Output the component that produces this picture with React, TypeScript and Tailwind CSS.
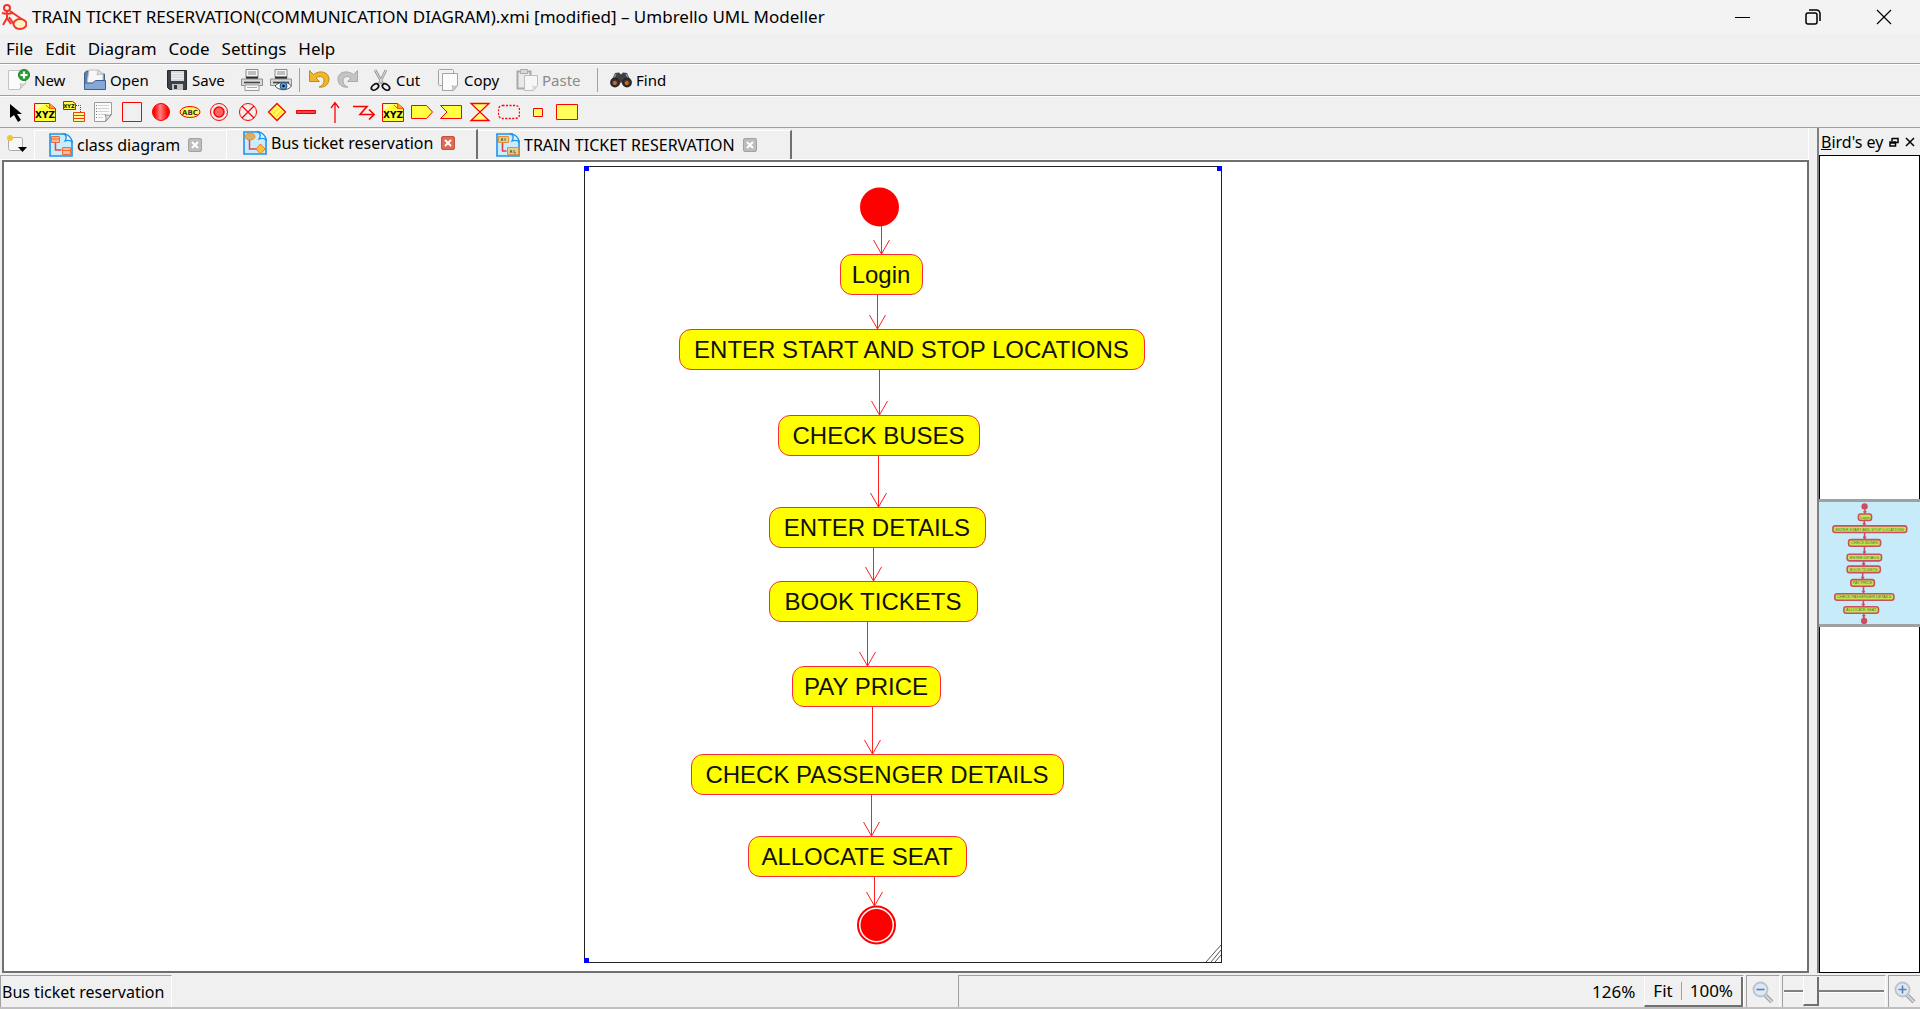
import type { ReactNode } from 'react';

type Box = { label: string; x: number; y: number; w: number };
type Link = { x: number; y1: number; y2: number };

const BOX_H = 41;

const boxes: Box[] = [
  { label: 'Login', x: 256, y: 88, w: 83 },
  { label: 'ENTER START AND STOP LOCATIONS', x: 95, y: 163, w: 466 },
  { label: 'CHECK BUSES', x: 194, y: 249, w: 202 },
  { label: 'ENTER DETAILS', x: 185, y: 341, w: 217 },
  { label: 'BOOK TICKETS', x: 185, y: 415, w: 209 },
  { label: 'PAY PRICE', x: 208, y: 500, w: 149 },
  { label: 'CHECK PASSENGER DETAILS', x: 107, y: 588, w: 373 },
  { label: 'ALLOCATE SEAT', x: 164, y: 670, w: 219 },
];

const links: Link[] = [
  { x: 297, y1: 60, y2: 88 },
  { x: 293, y1: 129, y2: 163 },
  { x: 295, y1: 204, y2: 249 },
  { x: 294, y1: 290, y2: 341 },
  { x: 289, y1: 382, y2: 415 },
  { x: 283, y1: 456, y2: 500 },
  { x: 288, y1: 541, y2: 588 },
  { x: 287, y1: 629, y2: 670 },
  { x: 290, y1: 711, y2: 740 },
];

function Svg({ children, size = 22 }: { children: ReactNode; size?: number }) {
  return (
    <svg width={size} height={size} viewBox={`0 0 ${size} ${size}`} fill="none" aria-hidden="true" className="shrink-0">
      {children}
    </svg>
  );
}

const AppIcon = () => (
  <Svg size={26}>
    <g stroke="#f4342a" strokeWidth="2">
      <circle cx="6" cy="4" r="3" />
      <path d="M6 7v7M1 9l5 1 6-1M6 14l-4 7M6 14l4 6M9 7l13 9M8 13l8 12" />
      <ellipse cx="19" cy="20" rx="6.5" ry="5" fill="#fdf3c4" />
    </g>
  </Svg>
);

const NewIcon = () => (
  <Svg>
    <path d="M.5 1.5h17v13l-6 6H.5z" fill="#fbfbfb" stroke="#c3c3c3" />
    <path d="M11.500 20.500c2-2 1-5 .5-6 2 1 4 1 5.500 0z" fill="#ddd" stroke="#b5b5b5" strokeWidth=".7" />
    <circle cx="16" cy="6" r="5.500" fill="#2f9e36" stroke="#19802a" />
    <path d="M16 2.500v7M12.500 6h7" stroke="#fff" strokeWidth="2.200" />
  </Svg>
);
const OpenIcon = () => (
  <Svg>
    <path d="M.5 20V4l2-2h7l2 3h9v15z" fill="#5d7fae" stroke="#3f6090" />
    <path d="M5 1h9l5 4v9H3z" fill="#f7f7f7" stroke="#bbb" />
    <path d="M14 1l-1 5 6-1z" fill="#ddd" stroke="#aaa" strokeWidth=".6" />
    <path d="M.5 20.500V14h8l3-2.500h10v9z" fill="#86a8d6" stroke="#3c5f95" />
  </Svg>
);
const SaveIcon = () => (
  <Svg>
    <path d="M1.500 1.500h19v19h-17l-2-2z" fill="#3d4248" stroke="#262a2e" />
    <path d="M5 2h13v10H5z" fill="#d6d9dc" />
    <path d="M5 4.500h13M5 7h13M5 9.500h13" stroke="#eef0f2" />
    <path d="M6 15h11v6H6z" fill="#bfc3c7" />
    <path d="M8 16h3v4H8z" fill="#33373c" />
  </Svg>
);
const printer = (
  <>
    <path d="M5 .5h12v8H5z" fill="#f5f5f5" stroke="#8a8a8a" />
    <path d="M7 3h8M7 5h8" stroke="#888" />
    <path d="M5 7.500h12v3H5z" fill="#2d2d2d" />
    <path d="M.5 10h21v6.500H.5z" fill="#d9d9d9" stroke="#8e8e8e" />
    <path d="M3 13.500h16" stroke="#444" strokeWidth="1.600" />
  </>
);
const PrintIcon = () => (
  <Svg>
    {printer}
    <path d="M4 16h14v5.500H4z" fill="#fafafa" stroke="#999" />
    <path d="M6 18.500h10" stroke="#aaa" />
  </Svg>
);
const PreviewIcon = () => (
  <Svg>
    {printer}
    <path d="M5 17c5-5 12-5 16.500 0-4 5-12 5-16.500 0z" fill="#fff" stroke="#38516b" />
    <circle cx="13.500" cy="17" r="3.500" fill="#5b9bd0" stroke="#23527c" />
    <circle cx="13.500" cy="17" r="1.300" fill="#111" />
  </Svg>
);
const UndoIcon = () => (
  <Svg>
    <path d="M1.500 1.500v11h10L8 9c4-3 8-1 8 3 0 3-2 5-5 6 6 1 10-3 10-8C21 3 12 .5 5.500 5.500z" fill="#efb62c" stroke="#c48a12" />
  </Svg>
);
const RedoIcon = () => (
  <Svg>
    <path d="M20.500 1.500v11h-10L14 9c-4-3-8-1-8 3 0 3 2 5 5 6-6 1-10-3-10-8C1 3 10 .5 16.500 5.500z" fill="#c4c4c4" stroke="#a8a8a8" />
  </Svg>
);
const CutIcon = () => (
  <Svg>
    <path d="M5 1l8 14M16 1L9 15" stroke="#8b9094" strokeWidth="2.600" />
    <path d="M5 1l8 14M16 1L9 15" stroke="#e4e6e8" strokeWidth="1" />
    <ellipse cx="5" cy="18" rx="4" ry="2.600" transform="rotate(-35 5 18)" stroke="#111" strokeWidth="1.800" />
    <ellipse cx="16" cy="18" rx="4" ry="2.600" transform="rotate(35 16 18)" stroke="#111" strokeWidth="1.800" />
  </Svg>
);
const CopyIcon = () => (
  <Svg>
    <rect x=".5" y=".5" width="15" height="16" rx="1" fill="#f2f2f2" stroke="#a3a3a3" />
    <path d="M4.500 4.500h15v12l-4 5h-11z" fill="#fcfcfc" stroke="#a3a3a3" />
    <path d="M14 21.500c1-2 .8-3 0-5 2 1 4 1 5.500 0z" fill="#ccc" stroke="#aaa" strokeWidth=".6" />
  </Svg>
);
const PasteIcon = () => (
  <Svg>
    <path d="M1.500 2.500h13v17h-13z" fill="#e9e9e9" stroke="#a9a9a9" strokeWidth="2" />
    <path d="M4.500.5h7v4h-7z" fill="#d8d8d8" stroke="#aaa" />
    <path d="M8.500 6.500h13v10l-4 5h-9z" fill="#f6f6f6" stroke="#bdbdbd" />
    <path d="M16 21.500c1-2 .8-3 0-5 2 1 4 1 5.500 0z" fill="#d4d4d4" />
  </Svg>
);
const FindIcon = () => (
  <Svg>
    <path d="M1 13L5 4l4-.5 2 2 2-2 4 .5 4 9-3 4-5-1-2-3-2 3-5 1z" fill="#3e4043" />
    <path d="M6 5l-3 6M16 5l3 6" stroke="#8d9195" strokeWidth="1.500" />
    <circle cx="5" cy="13.500" r="4" fill="#4d3527" stroke="#25272a" strokeWidth="1.800" />
    <circle cx="17" cy="13.500" r="4" fill="#4d3527" stroke="#25272a" strokeWidth="1.800" />
    <circle cx="4.800" cy="14" r="2" fill="#c96a25" />
    <circle cx="16.800" cy="14" r="2" fill="#c96a25" />
  </Svg>
);

const NoteTextIcon = () => (
  <Svg>
    <path d="M.5 2.500h15l6 5v13H.5z" fill="#ffff3c" stroke="red" />
    <path d="M2 3.500h8L2 9z" fill="#fffbd0" />
    <path d="M15.500 2.500v5h6M12 4l4 4" stroke="#f50" fill="#ff9d2e" />
    <text x="11" y="17" textAnchor="middle" fontSize="9" fontWeight="bold" fontFamily="'DejaVu Sans', sans-serif" fill="#000">XYZ</text>
  </Svg>
);
const AnchorIcon = () => (
  <Svg>
    <path d="M.5.5h9l3 2v6H.5z" fill="#ffff3c" stroke="red" />
    <text x="6" y="7" textAnchor="middle" fontSize="5" fontWeight="bold" fontFamily="'DejaVu Sans', sans-serif" fill="#000">XYZ</text>
    <path d="M13 4.500h4.500V12" stroke="red" strokeDasharray="1 1" />
    <path d="M10.500 11.500h11v9h-11zM10.500 14.500h11M10.500 17.500h11" fill="#ffff8c" stroke="#f23c12" />
  </Svg>
);
const MemoIcon = () => (
  <Svg>
    <path d="M2.500 1.500h17v12l-6 7h-11z" fill="#fafafa" stroke="#9c9c9c" />
    <path d="M6 4.500h11M6 7.500h11M6 10.500h11M6 13.500h7M6 16.500h5" stroke="#cfd3d7" />
    <path d="M4.500 4v13" stroke="#777" strokeDasharray="1 2" />
    <path d="M13.500 20.500c1-3 .5-5-.5-7 2 1 4 1 6.500 0z" fill="#e0e0e0" stroke="#8c8c8c" />
  </Svg>
);

const diagramTools: { name: string; icon: ReactNode }[] = [
  { name: 'Select', icon: <Svg><path d="M5 3v14l4-3 4 7 3-2-4-6h5z" fill="#000" /></Svg> },
  { name: 'Note', icon: <NoteTextIcon /> },
  { name: 'Anchor', icon: <AnchorIcon /> },
  { name: 'Memo', icon: <MemoIcon /> },
  { name: 'Box', icon: <Svg><path d="M1.500 1.500h19v19h-19z" stroke="red" /></Svg> },
  {
    name: 'Initial activity',
    icon: (
      <Svg>
        <defs>
          <linearGradient id="ball">
            <stop offset="0.1" stopColor="#f00" />
            <stop offset="0.45" stopColor="#ff8080" />
            <stop offset="0.9" stopColor="#f00" />
          </linearGradient>
        </defs>
        <circle cx="11" cy="11" r="8.500" fill="url(#ball)" stroke="red" />
      </Svg>
    ),
  },
  {
    name: 'Activity',
    icon: (
      <Svg>
        <ellipse cx="11" cy="11" rx="10" ry="5.500" fill="#ffff50" stroke="red" />
        <text x="11" y="14" textAnchor="middle" fontSize="7" fontWeight="bold" fontFamily="'DejaVu Sans', sans-serif" fill="#433">ABC</text>
      </Svg>
    ),
  },
  { name: 'End activity', icon: <Svg><circle cx="11" cy="11" r="8.500" stroke="red" /><circle cx="11" cy="11" r="5" fill="#ff6262" stroke="red" strokeWidth="1.500" /></Svg> },
  { name: 'Final activity', icon: <Svg><circle cx="11" cy="11" r="8.500" stroke="red" /><path d="M5 5l12 12M17 5L5 17" stroke="red" strokeWidth="1.300" /></Svg> },
  { name: 'Branch', icon: <Svg><path d="M11 2.500l8.500 8.500-8.500 8.500L2.500 11z" fill="#ffff4a" stroke="red" strokeWidth="1.300" /><path d="M7 13l6-6M10 16l6-6" stroke="#f6d96a" strokeWidth="1.500" /></Svg> },
  { name: 'Fork/Join', icon: <Svg><path d="M1.500 9.500h19v3h-19z" fill="#f44" stroke="#e80000" /></Svg> },
  { name: 'Transition', icon: <Svg><path d="M11 22V1.500M7 7l4-5.500L15 7" stroke="red" strokeWidth="1.300" /></Svg> },
  { name: 'Exception', icon: <Svg><path d="M0 5.500h14l-7 8h14M16 8.500l5 5-5 5" stroke="red" strokeWidth="1.600" /></Svg> },
  { name: 'Text label', icon: <NoteTextIcon /> },
  { name: 'Send signal', icon: <Svg><path d="M.5 4.500h15l6 6.500-6 6.500H.5z" fill="#ffff40" stroke="red" /></Svg> },
  { name: 'Accept signal', icon: <Svg><path d="M.5 4.500h21v13H.5L7 11z" fill="#ffff40" stroke="red" /></Svg> },
  { name: 'Accept time event', icon: <Svg><path d="M2 2.500h18L2 19.500h18z" fill="#ffff70" stroke="red" strokeWidth="1.300" /></Svg> },
  { name: 'Region', icon: <Svg><rect x=".5" y="4.500" width="21" height="13" rx="4" stroke="red" strokeWidth="1.300" strokeDasharray="2 1.500" /></Svg> },
  { name: 'Pin', icon: <Svg><path d="M6.500 7.500h9v8h-9z" fill="#ffff60" stroke="red" /></Svg> },
  { name: 'Object node', icon: <Svg><path d="M.5 3.500h21v15H.5z" fill="#ffff5c" stroke="red" /></Svg> },
];

function TabIcon({ kind }: { kind: 'class' | 'activity' | 'comm' }) {
  return (
    <Svg size={24}>
      <path d="M1 1h15l7 7v15H1z" fill="#c9ecff" stroke="#1f93ea" strokeWidth="1.600" />
      <path d="M15 1c3 2 3 4 1 7 3-1 5-1 7 1C23 5 19 1 15 1z" fill="#e9f8ff" stroke="#1f93ea" strokeWidth="1.300" />
      {kind === 'class' && (
        <g stroke="#e8703c" fill="#ffb79a">
          <path d="M2.500 3.500h8v6h-8zM13.500 14.500h8v7h-8z" />
          <path d="M2.500 6h8M13.500 17.500h8" />
          <path d="M6.500 10v7h6" fill="none" strokeWidth="1.500" stroke="#e04a3a" />
        </g>
      )}
      {kind === 'activity' && (
        <g stroke="#f08a20">
          <ellipse cx="7" cy="5.500" rx="5" ry="3.500" fill="#dcae62" />
          <path d="M6.500 9v9h7" stroke="#f04040" strokeWidth="1.500" />
          <path d="M17.500 13l4.500 5-4.500 5-4.500-5z" fill="#ffc428" stroke="#f5702c" />
        </g>
      )}
      {kind === 'comm' && (
        <g stroke="#e0903c" fill="#e3cf8e">
          <path d="M2.500 3.500h10v6h-10zM11.500 14.500h11v7h-11z" />
          <path d="M5 8l1-3 1 3M9 5v3M14 20l1-3 1 3M18 17v3h2" stroke="#6d7040" fill="none" />
          <path d="M6.500 10v8h4" fill="none" stroke="#e83a3a" strokeWidth="1.500" />
        </g>
      )}
    </Svg>
  );
}

function CloseBox({ active, label }: { active?: boolean; label: string }) {
  return (
    <button
      aria-label={`Close ${label}`}
      className={
        active
          ? 'flex size-[14px] items-center justify-center rounded-xs border border-[#c5513c] bg-[#dd6a52]'
          : 'flex size-[14px] items-center justify-center rounded-xs border border-[#a2a2a2] bg-[#bdbdbd]'
      }
    >
      <Svg size={8}>
        <path d="M1 1l6 6M7 1L1 7" stroke="#fff" strokeWidth="2" />
      </Svg>
    </button>
  );
}

function ToolButton({ icon, label, width, disabled }: { icon: ReactNode; label: string; width: string; disabled?: boolean }) {
  return (
    <button disabled={disabled} className={`flex h-full items-center gap-1 pl-2 whitespace-nowrap disabled:text-[#8a8a8a] ${width}`}>
      {icon}
      {label}
    </button>
  );
}

function IconButton({ icon, label }: { icon: ReactNode; label: string }) {
  return (
    <button aria-label={label} className="flex h-full w-[29px] items-center justify-center">
      {icon}
    </button>
  );
}

const Divider = () => <span className="mx-1 h-6 w-px bg-[#a0a0a0]" />;

function Magnifier({ plus }: { plus?: boolean }) {
  return (
    <Svg>
      <path d="M13 14l7 7" stroke="#9f9f9f" strokeWidth="4" />
      <path d="M13 14l7 7" stroke="#d6d6d6" strokeWidth="2" />
      <circle cx="8.500" cy="8.500" r="7" fill="#dbe9f7" stroke="#bfc3c8" strokeWidth="1.800" />
      <path d={plus ? 'M4.500 8.500h8M8.500 4.500v8' : 'M4.500 8.500h8'} stroke="#5a7fb0" strokeWidth="1.600" />
    </Svg>
  );
}

function Overview() {
  return (
    <svg viewBox="7 13 638 765" preserveAspectRatio="none" className="h-[122px] w-full" role="img" aria-label="Diagram overview">
      <g stroke="#cb4f5f" strokeWidth="10">
        {links.map((l) => (
          <path key={l.y1} d={`M${l.x} ${l.y1}V${l.y2}M${l.x - 10} ${l.y2 - 14}h20`} />
        ))}
        {boxes.map((b) => (
          <rect key={b.label} x={b.x} y={b.y} width={b.w} height={BOX_H} rx="14" fill="#c3e553" />
        ))}
      </g>
      {boxes.map((b) => (
        <text key={b.label} x={b.x + b.w / 2} y={b.y + 29} textAnchor="middle" fontSize="24" fontFamily="'Liberation Sans', sans-serif" fill="#55702c">
          {b.label}
        </text>
      ))}
      <circle cx="295" cy="41" r="20" fill="#cb4f5f" />
      <circle cx="292" cy="759" r="20" fill="#cb4f5f" />
    </svg>
  );
}

function Diagram() {
  return (
    <div className="relative h-[797px] w-[638px] shrink-0 font-['Liberation_Sans',sans-serif] text-[24px] text-[#111] outline outline-1 -outline-offset-1 outline-[#222]">
      <svg className="absolute inset-0 size-full" fill="none" aria-hidden="true">
        <circle cx="295.500" cy="41" r="19.500" fill="red" />
        {links.map((l) => (
          <path key={l.y1} stroke="#ff2020" d={`M${l.x + 0.5} ${l.y1}V${l.y2}m-8-14l8 14 8-14`} />
        ))}
        <circle cx="292.500" cy="759" r="18.500" fill="#fff" stroke="red" strokeWidth="2" />
        <circle cx="292.500" cy="759" r="16" fill="red" />
        <path d="M622 796l15-17M627 796l10-12M631 796l6-7" stroke="#555" />
        <path d="M0 0h5v5H0zM633 0h5v5h-5zM0 792h5v5H0z" fill="#00f" />
      </svg>
      {boxes.map((b) => (
        <div
          key={b.label}
          className="absolute flex h-[41px] items-center justify-center rounded-xl border border-red-500 bg-[#ff0] whitespace-nowrap"
          style={{ left: b.x, top: b.y, width: b.w }}
        >
          {b.label}
        </div>
      ))}
    </div>
  );
}

export default function App() {
  return (
    <div className="flex h-screen min-h-[640px] flex-col overflow-hidden bg-[#f0f0f0] font-['Noto_Sans',sans-serif] text-[15px] leading-5 text-black">
      <header className="flex h-[34px] shrink-0 items-center bg-[#f3f3f3] pl-px text-[17px]">
        <AppIcon />
        <h1 className="ml-[5px] grow whitespace-nowrap">
          TRAIN TICKET RESERVATION(COMMUNICATION DIAGRAM).xmi [modified] – Umbrello UML Modeller
        </h1>
        <div className="flex">
          <button aria-label="Minimize" className="flex h-8 w-[70px] items-center justify-center">
            <Svg size={16}><path d="M0 8.500h15" stroke="#000" /></Svg>
          </button>
          <button aria-label="Restore" className="flex h-8 w-[70px] items-center justify-center">
            <Svg size={16}>
              <rect x="1" y="4" width="11" height="11" rx="2" stroke="#000" strokeWidth="1.500" />
              <path d="M4 1h7.500A3.500 3.500 0 0 1 15 4.500V12" stroke="#000" strokeWidth="1.500" />
            </Svg>
          </button>
          <button aria-label="Close" className="flex h-8 w-[72px] items-center justify-center">
            <Svg size={16}><path d="M1 1l14 14M15 1L1 15" stroke="#000" strokeWidth="1.200" /></Svg>
          </button>
        </div>
      </header>

      <nav className="flex h-[30px] shrink-0 items-center gap-3 border-b border-[#a0a0a0] pl-[6px] text-[17px]">
        {['File', 'Edit', 'Diagram', 'Code', 'Settings', 'Help'].map((m) => (
          <button key={m}>{m}</button>
        ))}
      </nav>

      <div className="flex h-8 shrink-0 items-center border-t border-b border-t-white border-b-[#a0a0a0]">
        <ToolButton icon={<NewIcon />} label="New" width="w-[76px]" />
        <ToolButton icon={<OpenIcon />} label="Open" width="w-[82px]" />
        <ToolButton icon={<SaveIcon />} label="Save" width="w-[79px]" />
        <IconButton icon={<PrintIcon />} label="Print" />
        <IconButton icon={<PreviewIcon />} label="Print preview" />
        <Divider />
        <IconButton icon={<UndoIcon />} label="Undo" />
        <IconButton icon={<RedoIcon />} label="Redo" />
        <ToolButton icon={<CutIcon />} label="Cut" width="w-[68px]" />
        <ToolButton icon={<CopyIcon />} label="Copy" width="w-[78px]" />
        <ToolButton icon={<PasteIcon />} label="Paste" width="w-[85px]" disabled />
        <Divider />
        <ToolButton icon={<FindIcon />} label="Find" width="w-[76px]" />
      </div>

      <div className="flex h-8 shrink-0 items-center border-t border-b border-t-white border-b-[#a0a0a0] pl-px">
        {diagramTools.map((t) => (
          <IconButton key={t.name} icon={t.icon} label={t.name} />
        ))}
      </div>

      <div className="flex min-h-0 grow">
        <main className="flex min-w-0 grow flex-col">
          <div className="flex h-8 shrink-0 items-stretch border-r border-b border-white text-[16px]">
            <button aria-label="New diagram" className="flex w-[34px] items-center justify-center">
              <Svg>
                <rect x="2.500" y="4.500" width="14" height="13" rx="2" fill="#f7f7f7" stroke="#aaa" />
                <circle cx="4" cy="5" r="3" fill="#f5c33b" />
                <path d="M12 14h9l-4.500 5z" fill="#000" />
              </Svg>
            </button>
            <div className="mt-0.5 flex w-[192px] items-center border-t border-l border-white pb-px pl-[14px]">
              <TabIcon kind="class" />
              <button className="mr-2 ml-1 whitespace-nowrap">class diagram</button>
              <CloseBox label="class diagram" />
            </div>
            <div className="mt-px flex w-[252px] items-center border-t border-l border-r-2 border-white border-r-[#707070] pb-[3px] pl-4">
              <TabIcon kind="activity" />
              <button className="mr-2 ml-1 whitespace-nowrap">Bus ticket reservation</button>
              <CloseBox active label="Bus ticket reservation" />
            </div>
            <div className="mt-0.5 flex w-[314px] items-center border-t border-r-2 border-white border-r-[#707070] pb-px pl-[18px]">
              <TabIcon kind="comm" />
              <button className="mr-2 ml-1 whitespace-nowrap">TRAIN TICKET RESERVATION</button>
              <CloseBox label="TRAIN TICKET RESERVATION" />
            </div>
          </div>
          <div className="ml-0.5 flex min-h-0 grow justify-center overflow-hidden border-2 border-[#707070] bg-white pt-1 pr-1.5">
            <Diagram />
          </div>
        </main>

        <div className="w-2 shrink-0" />

        <aside className="flex w-[103px] shrink-0 flex-col border-l-2 border-[#808080]">
          <div className="flex h-[27px] shrink-0 items-center pl-0.5 text-[16px]">
            <h2 className="w-[63px] overflow-hidden whitespace-nowrap"><span className="underline">B</span>ird's eye view</h2>
            <button aria-label="Float" className="ml-[3px] flex w-[14px] justify-center">
              <Svg size={10}><path d="M3 1.500h6v4H7M1 5h5.500v4H1zM3 1v3M1 6h5" stroke="#000" strokeWidth="1.500" /></Svg>
            </button>
            <button aria-label="Close panel" className="ml-0.5 flex w-[14px] justify-center">
              <Svg size={10}><path d="M1 1l8 8M9 1L1 9" stroke="#000" strokeWidth="1.500" /></Svg>
            </button>
          </div>
          <div className="flex grow flex-col justify-center border border-black bg-white pb-0.5">
            <div className="-mx-px border-y-[3px] border-[#a0a0a0] bg-[#c8ebfa]">
              <Overview />
            </div>
          </div>
        </aside>
      </div>

      <footer className="flex h-9 shrink-0 items-stretch gap-0.5 border-b-2 border-[#bfbfbf] pt-0.5 text-[17px]">
        <div className="flex w-[172px] items-center border-t border-r border-l border-[#a0a0a0] border-r-white pl-px text-[16px] whitespace-nowrap">Bus ticket reservation</div>
        <div className="grow" />
        <div className="flex w-[786px] items-center justify-end border-t border-r border-l border-[#a0a0a0] border-r-white">
          <span className="mr-[9px]">126%</span>
          <div className="flex h-[30px] items-center border-r-2 border-b-2 border-l border-r-[#707070] border-b-[#707070] border-l-white">
            <button className="px-2">Fit</button>
            <span className="h-[18px] w-px bg-[#a0a0a0]" />
            <button className="px-2">100%</button>
          </div>
        </div>
        <button aria-label="Zoom out" className="flex w-[34px] items-center justify-center border-t border-r border-l border-[#a0a0a0] border-r-white"><Magnifier /></button>
        <div className="flex w-[104px] items-center border-t border-r border-l border-[#a0a0a0] border-r-white px-px">
          <input
            type="range"
            aria-label="Zoom level"
            defaultValue={23}
            className="h-[30px] w-full appearance-none bg-transparent [&::-webkit-slider-runnable-track]:h-[3px] [&::-webkit-slider-runnable-track]:border-t-2 [&::-webkit-slider-runnable-track]:border-b [&::-webkit-slider-runnable-track]:border-t-[#808080] [&::-webkit-slider-runnable-track]:border-b-white [&::-webkit-slider-thumb]:-mt-[15px] [&::-webkit-slider-thumb]:h-[29px] [&::-webkit-slider-thumb]:w-4 [&::-webkit-slider-thumb]:appearance-none [&::-webkit-slider-thumb]:border-r-2 [&::-webkit-slider-thumb]:border-b-2 [&::-webkit-slider-thumb]:border-l [&::-webkit-slider-thumb]:border-r-[#707070] [&::-webkit-slider-thumb]:border-b-[#707070] [&::-webkit-slider-thumb]:border-l-white [&::-webkit-slider-thumb]:bg-[#f0f0f0]"
          />
        </div>
        <button aria-label="Zoom in" className="flex w-[32px] items-center justify-center border-t border-l border-[#a0a0a0]"><Magnifier plus /></button>
      </footer>
    </div>
  );
}
